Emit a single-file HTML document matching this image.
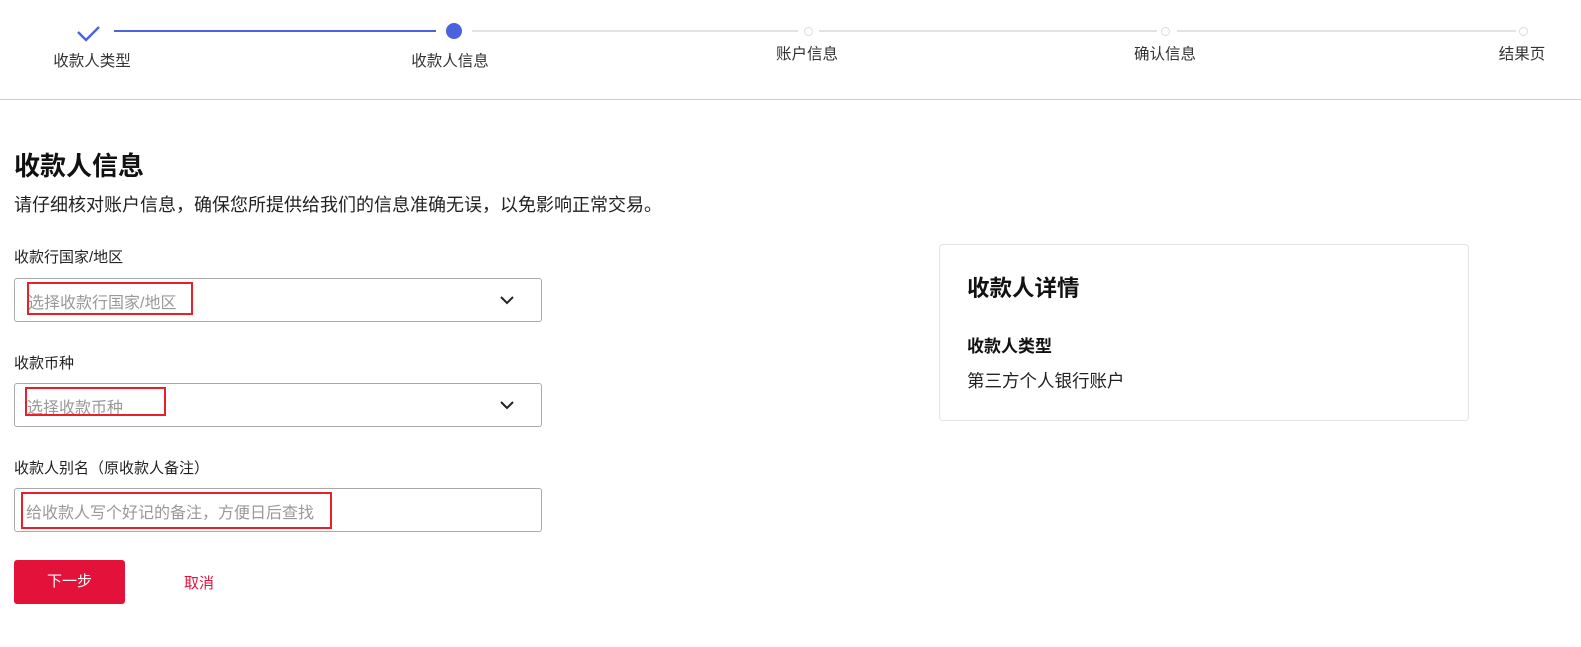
<!DOCTYPE html>
<html><head><meta charset="utf-8"><style>
*{margin:0;padding:0;box-sizing:border-box}
body{width:1581px;height:647px;background:#fff;font-family:"Liberation Sans","Noto Sans CJK SC",sans-serif;color:#222;position:relative;overflow:hidden}
.abs{position:absolute}
.lbl{position:absolute;font-size:15.5px;color:#333;white-space:nowrap;transform:translateX(-50%)}
.line{position:absolute;height:2px;top:30px}
.sd{position:absolute;width:9px;height:9px;border:1.5px solid #ddd;border-radius:50%;top:27px;background:#fff}
.flab{position:absolute;left:14px;font-size:15px;color:#222}
.box{position:absolute;left:14px;width:528px;height:44px;border:1px solid #aaa;border-radius:3px}
.ph{position:absolute;font-size:16px;color:#999;white-space:nowrap}
.red{position:absolute;border:2px solid #e8202a}
.chev{position:absolute;right:26px;top:16px}
</style></head><body>
<svg class="abs" style="left:76px;top:24px" width="26" height="20" viewBox="0 0 26 20"><path d="M2 8 L10 16 L23 3" fill="none" stroke="#4a63e0" stroke-width="2.4"/></svg>
<div class="line" style="left:114px;width:322px;background:#4a63e0"></div>
<div class="abs" style="left:446px;top:23px;width:16px;height:16px;border-radius:50%;background:#4a63e0"></div>
<div class="line" style="left:472px;width:326px;background:#e3e3e3"></div>
<div class="sd" style="left:804px"></div>
<div class="line" style="left:819px;width:338px;background:#e3e3e3"></div>
<div class="sd" style="left:1161px"></div>
<div class="line" style="left:1177px;width:339px;background:#e3e3e3"></div>
<div class="sd" style="left:1519px"></div>
<div class="lbl" style="left:92px;top:49px">收款人类型</div>
<div class="lbl" style="left:450px;top:49px">收款人信息</div>
<div class="lbl" style="left:807px;top:42px">账户信息</div>
<div class="lbl" style="left:1165px;top:42px">确认信息</div>
<div class="lbl" style="left:1522px;top:42px">结果页</div>
<div class="abs" style="left:0;top:99px;width:1581px;height:1px;background:#ccc"></div>

<div class="abs" style="left:14px;top:146px;font-size:26px;font-weight:bold;color:#111">收款人信息</div>
<div class="abs" style="left:14px;top:191px;font-size:18px;color:#222">请仔细核对账户信息，确保您所提供给我们的信息准确无误，以免影响正常交易。</div>

<div class="flab" style="top:246px">收款行国家/地区</div>
<div class="box" style="top:278px"><svg class="chev" width="16" height="10" viewBox="0 0 16 10"><path d="M2 2 L8 8 L14 2" fill="none" stroke="#222" stroke-width="2"/></svg></div>
<div class="ph" style="left:28px;top:289px">选择收款行国家/地区</div>
<div class="red" style="left:27px;top:282px;width:166px;height:33px"></div>

<div class="flab" style="top:352px">收款币种</div>
<div class="box" style="top:383px"><svg class="chev" width="16" height="10" viewBox="0 0 16 10"><path d="M2 2 L8 8 L14 2" fill="none" stroke="#222" stroke-width="2"/></svg></div>
<div class="ph" style="left:27px;top:394px">选择收款币种</div>
<div class="red" style="left:25px;top:387px;width:141px;height:29px"></div>

<div class="flab" style="top:457px">收款人别名（原收款人备注）</div>
<div class="box" style="top:488px"></div>
<div class="ph" style="left:26px;top:499px">给收款人写个好记的备注，方便日后查找</div>
<div class="red" style="left:21px;top:492px;width:311px;height:37px"></div>

<div class="abs" style="left:14px;top:560px;width:111px;height:44px;background:#e3123b;border-radius:3px;color:#fff;font-size:15px;text-align:center;line-height:44px">下一步</div>
<div class="abs" style="left:184px;top:572px;font-size:15px;color:#e3123b">取消</div>

<div class="abs" style="left:939px;top:244px;width:530px;height:177px;border:1px solid #e3e3e3;border-radius:4px"></div>
<div class="abs" style="left:967px;top:271px;font-size:22.5px;font-weight:bold;color:#111">收款人详情</div>
<div class="abs" style="left:967px;top:332px;font-size:17px;font-weight:bold;color:#111">收款人类型</div>
<div class="abs" style="left:967px;top:368px;font-size:17.5px;color:#222">第三方个人银行账户</div>
</body></html>
